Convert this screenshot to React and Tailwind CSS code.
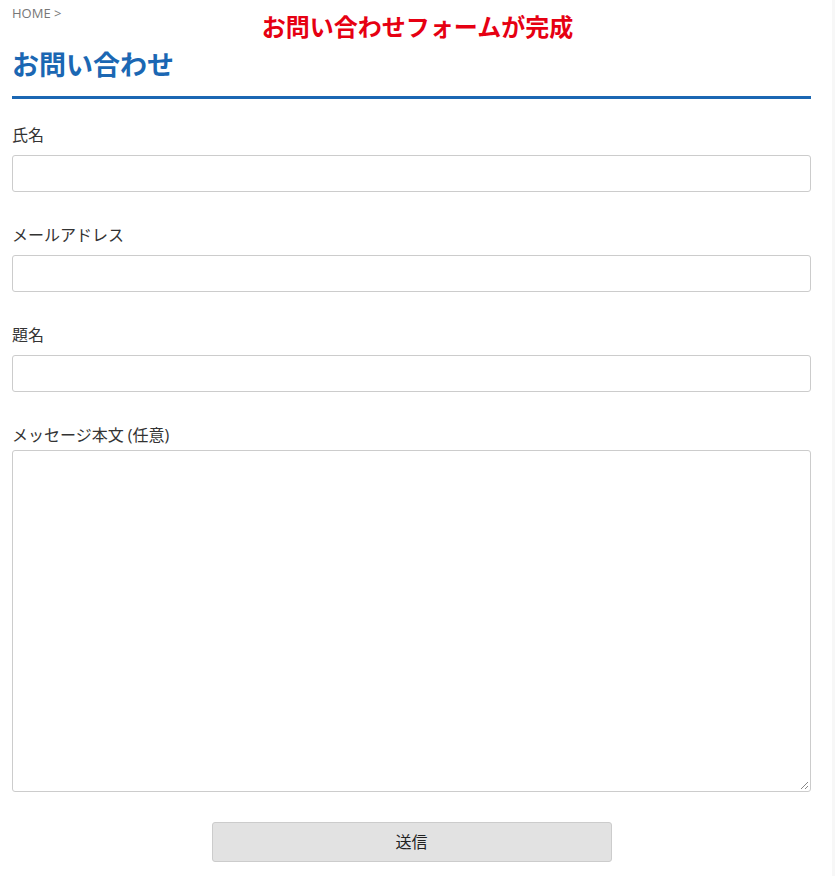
export default function App() {
  const font = { fontFamily: '"Open Sans", "Noto Sans CJK JP", sans-serif' };
  return (
    <div className="flex w-[835px] min-h-[876px] bg-white" style={font}>
      <div className="w-[832px] pl-3 pr-[21px]">
        <div className="relative h-[27px]">
          <div className="pt-[5px] text-[13px] leading-[17px] text-[#777]">HOME &gt;</div>
          <div className="absolute left-0 right-[-12px] top-[11px] text-center text-[24px] leading-[30px] font-bold text-[#e60012]" style={{ fontFamily: '"Noto Sans CJK JP", sans-serif' }}>
            お問い合わせフォームが完成
          </div>
        </div>
        <h1 className="mt-[19px] text-[27px] leading-[36px] font-bold text-[#1b67b3]" style={{ fontFamily: '"Noto Sans CJK JP", sans-serif' }}>
          お問い合わせ
        </h1>
        <div className="mt-[14px] h-[3px] bg-[#1b67b3]" />
        <div className="mt-[24px] flex flex-col">
          {['氏名', 'メールアドレス', '題名'].map((l) => (
            <div key={l} className="mb-[31px]">
              <div className="text-[16px] leading-[24px] text-[#333]">{l}</div>
              <div className="mt-[8px] h-[37px] rounded-[3px] border border-[#ccc] bg-white" />
            </div>
          ))}
          <div>
            <div className="text-[16px] leading-[24px] text-[#333]">メッセージ本文 (任意)</div>
            <div className="relative mt-[3px] h-[342px] rounded-[3px] border border-[#ccc] bg-white">
              <svg className="absolute right-[1px] bottom-[1px]" width="10" height="10" viewBox="0 0 10 10">
                <line x1="9" y1="2" x2="2" y2="9" stroke="#888" strokeWidth="1" />
                <line x1="9" y1="6" x2="6" y2="9" stroke="#888" strokeWidth="1" />
              </svg>
            </div>
          </div>
          <div className="mt-[30px] flex justify-center">
            <button className="h-[40px] w-[400px] rounded-[3px] border border-[#ccc] bg-[#e2e2e2] text-[16px] text-[#222]">
              送信
            </button>
          </div>
        </div>
      </div>
      <div className="w-[3px] bg-[#f7f7f7]" />
    </div>
  );
}
